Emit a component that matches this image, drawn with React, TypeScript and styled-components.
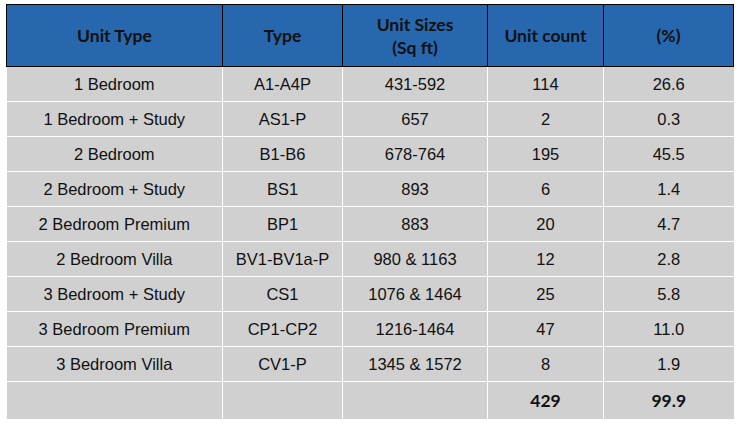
import * as React from 'react'
import styled, { createGlobalStyle } from 'styled-components'

interface IRow {
  unitType: string
  type: string
  size: string
  count: string
  percent: string
}

const rows: IRow[] = [
  { unitType: '1 Bedroom', type: 'A1-A4P', size: '431-592', count: '114', percent: '26.6' },
  { unitType: '1 Bedroom + Study', type: 'AS1-P', size: '657', count: '2', percent: '0.3' },
  { unitType: '2 Bedroom', type: 'B1-B6', size: '678-764', count: '195', percent: '45.5' },
  { unitType: '2 Bedroom + Study', type: 'BS1', size: '893', count: '6', percent: '1.4' },
  { unitType: '2 Bedroom Premium', type: 'BP1', size: '883', count: '20', percent: '4.7' },
  { unitType: '2 Bedroom Villa', type: 'BV1-BV1a-P', size: '980 & 1163', count: '12', percent: '2.8' },
  { unitType: '3 Bedroom + Study', type: 'CS1', size: '1076 & 1464', count: '25', percent: '5.8' },
  { unitType: '3 Bedroom Premium', type: 'CP1-CP2', size: '1216-1464', count: '47', percent: '11.0' },
  { unitType: '3 Bedroom Villa', type: 'CV1-P', size: '1345 & 1572', count: '8', percent: '1.9' }
]

const GlobalStyle = createGlobalStyle`
  html, body {
    margin: 0;
    padding: 0;
    background: #ffffff;
  }
  body {
    font-family: 'Liberation Sans', Arial, sans-serif;
  }
`

const Wrapper = styled.div`
  padding: 4px 6px 0 6px;
  width: 739px;
  box-sizing: border-box;
`

const Table = styled.table`
  width: 727px;
  border-collapse: collapse;
  table-layout: fixed;
`

const HeadCell = styled.th`
  background-color: #2767ad;
  color: #111111;
  border: 1px solid #000000;
  height: 61px;
  padding: 0 4px;
  font-family: 'Lato', 'Open Sans', sans-serif;
  font-weight: 700;
  font-size: 17.5px;
  line-height: 23px;
  text-align: center;
  vertical-align: middle;
`

const BodyRow = styled.tr<{ $total?: boolean }>`
  height: ${({ $total }) => ($total ? 38 : 35)}px;
`

const Cell = styled.td<{ $bold?: boolean }>`
  background-color: #d0d0d0;
  color: #111111;
  border: 1px solid #ffffff;
  padding: 0 4px;
  font-family: ${({ $bold }) =>
    $bold ? "'Lato', 'Open Sans', sans-serif" : "'Liberation Sans', Arial, sans-serif"};
  font-weight: ${({ $bold }) => ($bold ? 700 : 400)};
  font-size: ${({ $bold }) => ($bold ? 17.5 : 16.5)}px;
  text-align: center;
  vertical-align: middle;
  &:first-child {
    border-left: none;
  }
  &:last-child {
    border-right: none;
  }
`

const widths = [216, 120, 145, 116, 130]

export default function App() {
  return (
    <Wrapper>
      <GlobalStyle />
      <Table>
        <colgroup>
          {widths.map((w, i) => (
            <col key={i} style={{ width: w }} />
          ))}
        </colgroup>
        <thead>
          <tr>
            <HeadCell>Unit Type</HeadCell>
            <HeadCell>Type</HeadCell>
            <HeadCell>
              Unit Sizes
              <br />
              (Sq ft)
            </HeadCell>
            <HeadCell>Unit count</HeadCell>
            <HeadCell>(%)</HeadCell>
          </tr>
        </thead>
        <tbody>
          {rows.map((r, i) => (
            <BodyRow key={i}>
              <Cell>{r.unitType}</Cell>
              <Cell>{r.type}</Cell>
              <Cell>{r.size}</Cell>
              <Cell>{r.count}</Cell>
              <Cell>{r.percent}</Cell>
            </BodyRow>
          ))}
          <BodyRow $total>
            <Cell />
            <Cell />
            <Cell />
            <Cell $bold>429</Cell>
            <Cell $bold>99.9</Cell>
          </BodyRow>
        </tbody>
      </Table>
    </Wrapper>
  )
}
